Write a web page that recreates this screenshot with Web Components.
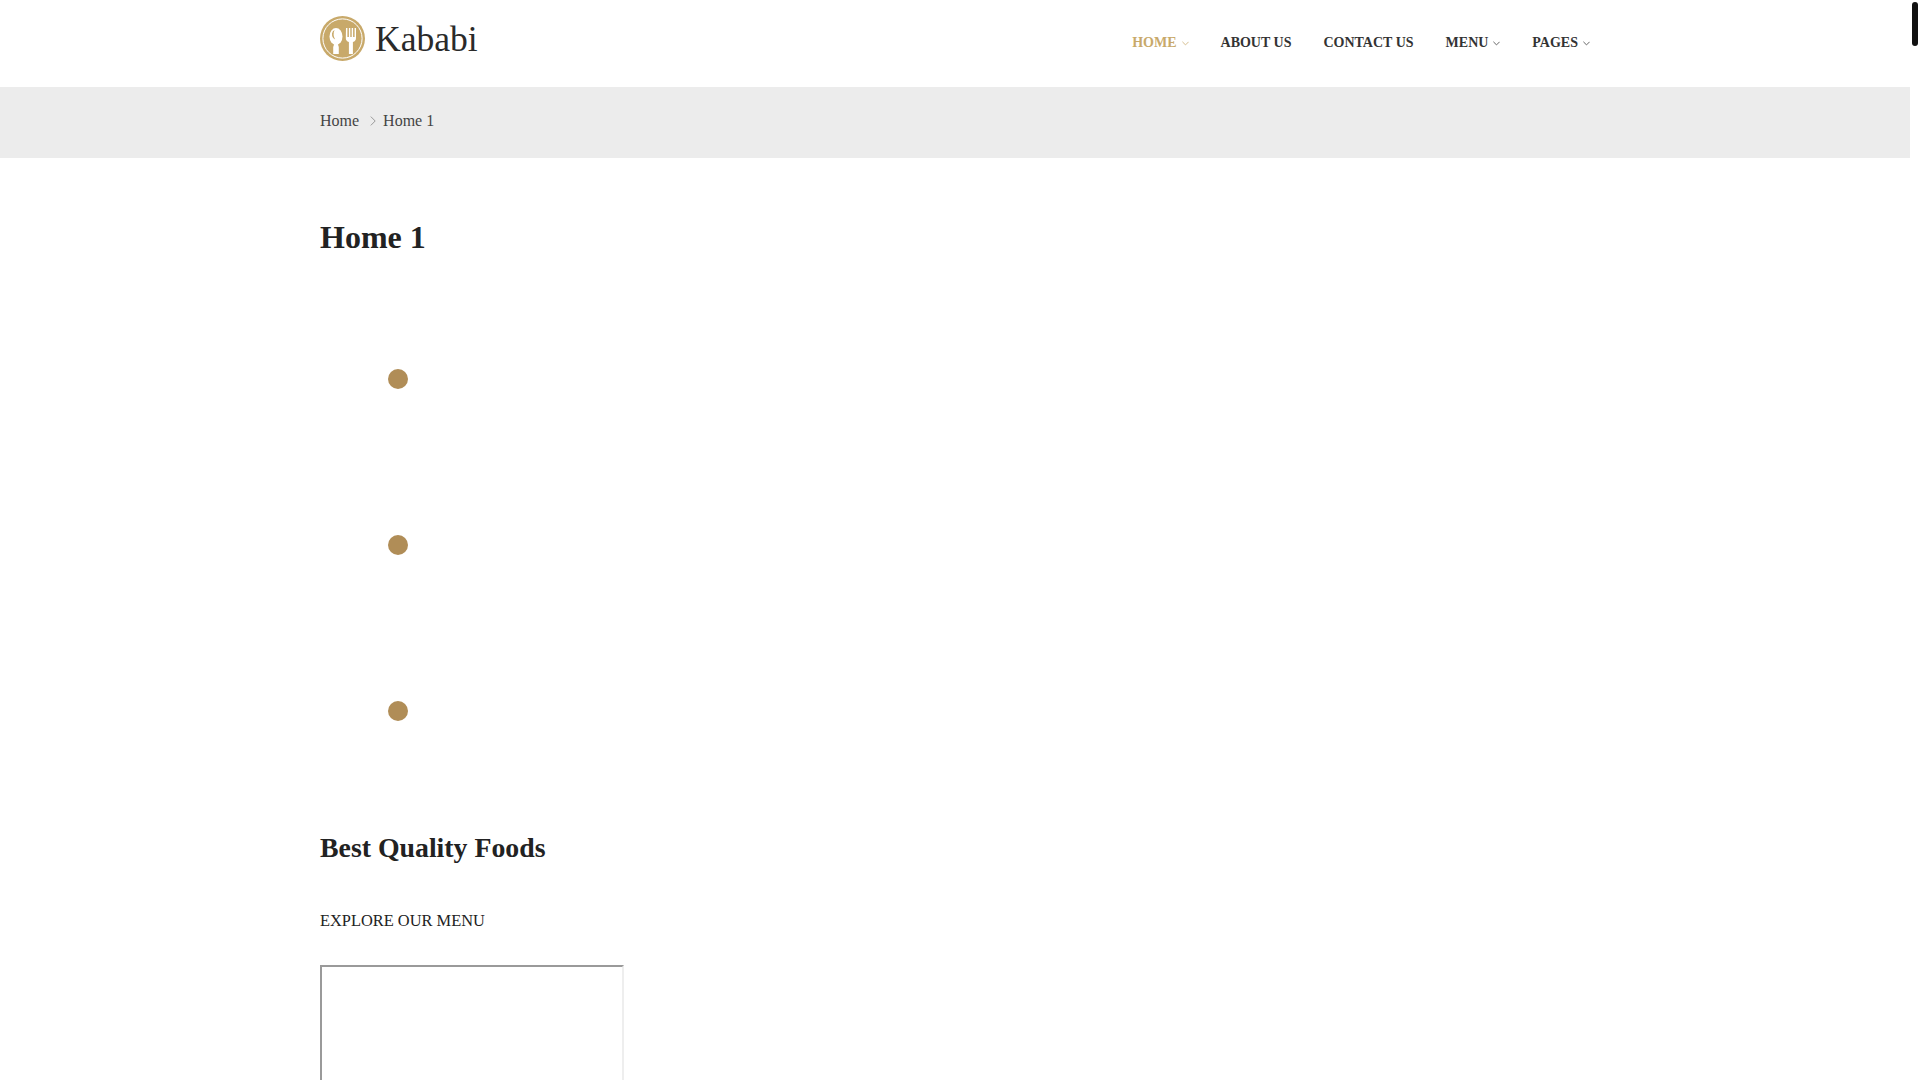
<!DOCTYPE html>
<html lang="en">
<head>
<meta charset="utf-8">
<title>Kababi - Home 1</title>
<style>
html, body { margin: 0; height: 100%; overflow: hidden; background: #fff; }
body { font-family: "Liberation Serif", serif; color: #222; }
</style>
</head>
<body>
<page-scrollbar></page-scrollbar>
<div style="width:1910px">
  <site-header>
    <nav-link active caret>Home</nav-link>
    <nav-link>About us</nav-link>
    <nav-link>Contact us</nav-link>
    <nav-link caret>Menu</nav-link>
    <nav-link caret>Pages</nav-link>
  </site-header>
  <bread-crumbs current="Home 1"></bread-crumbs>
  <page-body>
    <h1 slot="title">Home 1</h1>
  </page-body>
</div>

<script>
class PageScrollbar extends HTMLElement {
    constructor() {
        super();
        this.attachShadow({mode: "open"}).innerHTML = `
        <style>
        :host { position: fixed; top: 2px; right: 2px; width: 6px; height: 44px;
            background: #111; border-radius: 3px; display: block; }
        </style>`;
    }
}

class NavLink extends HTMLElement {
    constructor() {
        super();
        const caret = this.hasAttribute("caret");
        this.attachShadow({mode: "open"}).innerHTML = `
        <style>
        :host { display: flex; align-items: center; gap: 5px; height: 87px;
            font: bold 14px "Liberation Serif", serif; text-transform: uppercase;
            color: #333; cursor: pointer; }
        :host([active]) { color: #c8a96a; }
        span { position: relative; top: -1px; line-height: 16px; }
        svg { display: block; }
        </style>
        <span><slot></slot></span>
        ${caret ? `<svg width="7" height="5" viewBox="0 0 7 5" fill="none" stroke="currentColor" stroke-width="1" opacity="0.75"><path d="M0.4 0.8 L3.5 3.9 L6.6 0.8"/></svg>` : ""}`;
    }
}

class SiteHeader extends HTMLElement {
    constructor() {
        super();
        this.attachShadow({mode: "open"}).innerHTML = `
        <style>
        :host { display: block; height: 87px; background: #fff; }
        .wrap { display: flex; justify-content: space-between; align-items: center;
            width: 1270px; margin: 0 0 0 320px; height: 87px; }
        .logo { display: flex; align-items: center; gap: 10px; position: relative; top: -5px; }
        .logo svg { display: block; }
        .brand { font: 35.6px/40px "Liberation Serif", serif; color: #2a2a2a; width: 110px; }
        nav { display: flex; gap: 32px; }
        </style>
        <div class="wrap">
            <div class="logo">
                <svg width="45" height="45" viewBox="0 0 45 45">
                    <circle cx="22.5" cy="22.5" r="22.5" fill="#c8a96a"/>
                    <circle cx="22.5" cy="22.5" r="19.6" fill="none" stroke="#fff" stroke-width="1"/>
                    <ellipse cx="16" cy="20.5" rx="6.5" ry="8.5" fill="#fff"/>
                    <path d="M12 17.5 q0.5 -3 2.6 -3.6 q-1.2 2 -1 5 q0.2 2.6 1.6 4.6 q-3.4 -1.6 -3.2 -6 z" fill="#c8a96a"/>
                    <path d="M14.2 28 h3.6 l1 3 v7 h-5.6 v-7 z" fill="#fff"/>
                    <path d="M26 12 h1.4 v9 h1.5 v-9 h1.4 v9 h1.4 v-9 h1.4 v9 h1.5 v-9 h1.4 v10 q0 3 -3.1 4 v12 h-4 v-12 q-3.1 -1 -3.1 -4 z" fill="#fff"/>
                </svg>
                <span class="brand">Kababi</span>
            </div>
            <nav><slot></slot></nav>
        </div>`;
    }
}

class BreadCrumbs extends HTMLElement {
    constructor() {
        super();
        this.attachShadow({mode: "open"}).innerHTML = `
        <style>
        :host { display: block; height: 71px; background: #ececec; }
        .wrap { display: flex; align-items: center; padding: 24px 0 0 320px;
            font: 16px/19px "Liberation Serif", serif; color: #444; }
        svg { display: block; margin: 0 7px 0 11px; }
        </style>
        <div class="wrap">
            <span>Home</span>
            <svg width="6" height="10" viewBox="0 0 6 10" fill="none" stroke="#999" stroke-width="1"><path d="M0.8 0.6 L5.2 5 L0.8 9.4"/></svg>
            <span>${this.getAttribute("current")}</span>
        </div>`;
    }
}

class LoaderDot extends HTMLElement {
    constructor() {
        super();
        this.attachShadow({mode: "open"}).innerHTML = `
        <style>
        :host { display: flex; align-items: center; height: 166px; padding-left: 68px; }
        i { display: block; width: 20px; height: 20px; border-radius: 50%; background: #b08d57; }
        </style>
        <i></i>`;
    }
}

class PageBody extends HTMLElement {
    constructor() {
        super();
        this.attachShadow({mode: "open"}).innerHTML = `
        <style>
        :host { display: block; padding-left: 320px; color: #222; }
        ::slotted(h1), h2, p { margin: 0; }
        ::slotted(h1) { padding-top: 58px; font: bold 32px/42px "Liberation Serif", serif; }
        .dots { margin-top: 38px; }
        h2 { margin-top: 36px; font: bold 27.8px/36px "Liberation Serif", serif; }
        p { margin-top: 46px; font: 16.4px/18px "Liberation Serif", serif; text-transform: uppercase; }
        iframe { display: block; margin-top: 35px; border: 2px solid; border-color: #9a9a9a #eee #eee #9a9a9a; }
        </style>
        <slot name="title"></slot>
        <div class="dots">
            <loader-dot></loader-dot>
            <loader-dot></loader-dot>
            <loader-dot></loader-dot>
        </div>
        <h2>Best Quality Foods</h2>
        <p>Explore our menu</p>
        <iframe title="menu"></iframe>`;
    }
}

customElements.define("page-scrollbar", PageScrollbar);
customElements.define("nav-link", NavLink);
customElements.define("site-header", SiteHeader);
customElements.define("bread-crumbs", BreadCrumbs);
customElements.define("loader-dot", LoaderDot);
customElements.define("page-body", PageBody);
</script>
</body>
</html>
